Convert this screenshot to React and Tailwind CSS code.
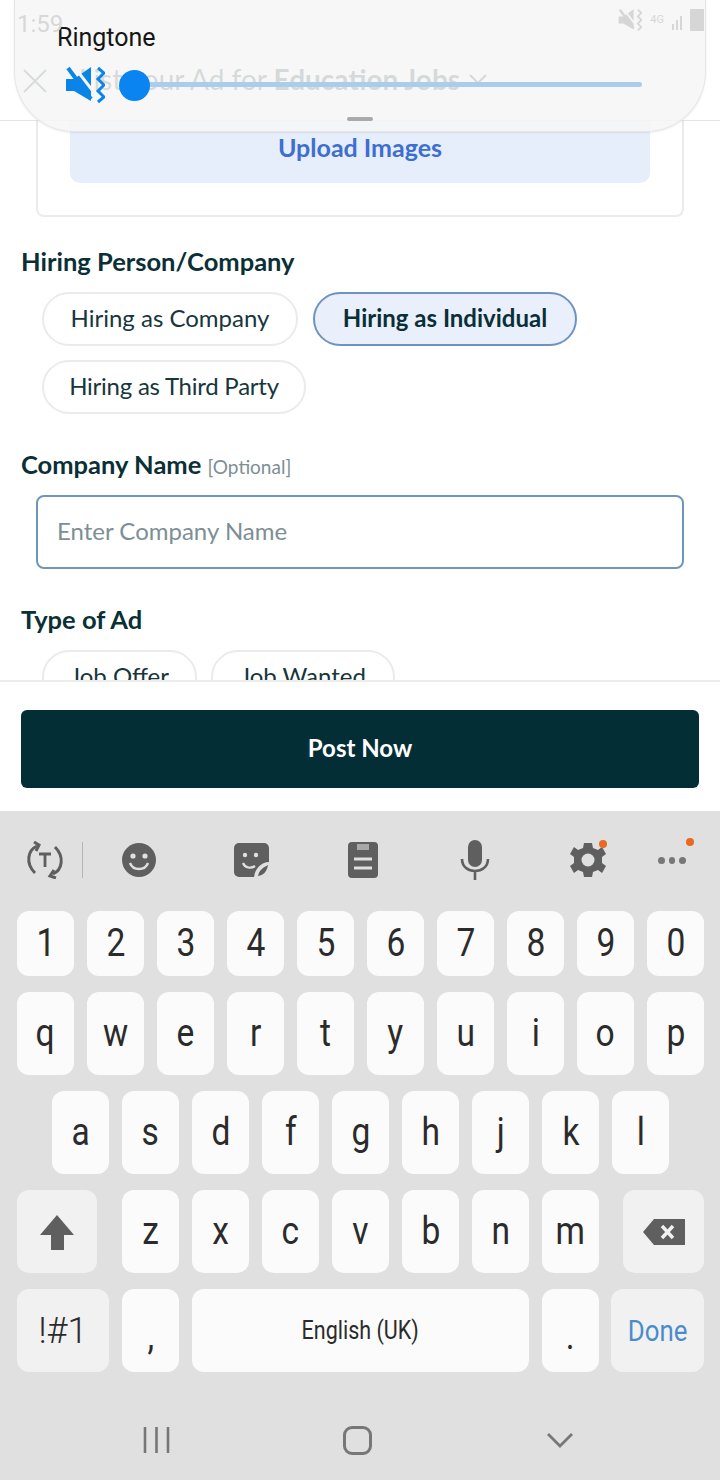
const site = { fontFamily: "Lato, 'Open Sans', sans-serif" };

function Key({ children, className = "w-[57px]", muted = false, text = "text-[39px]", plain = false }) {
  return (
    <div className={`${className} flex items-center justify-center rounded-[12px] ${muted ? "bg-[#f1f1f1]" : "bg-[#fbfbfb]"} ${text} text-[#2b2b2b]`}>
      <span className={plain ? "" : "inline-block scale-x-[0.86]"}>{children}</span>
    </div>
  );
}

function Row({ keys, className }) {
  return (
    <div className={`flex shrink-0 gap-[13px] ${className}`}>
      {keys.map((k) => (
        <Key key={k}>{k}</Key>
      ))}
    </div>
  );
}

function Chip({ children, active, className = "" }) {
  return (
    <div className={`flex h-[54px] items-center justify-center rounded-full border-2 pb-[2px] text-[24px] ${active ? "border-[#6f93c0] bg-[#e9f0fc] font-bold text-[#0b2f36]" : "border-[#ebebeb] bg-white text-[#17363c]"} ${className}`}>
      {children}
    </div>
  );
}

function Label({ children, className = "" }) {
  return <div className={`pl-[21px] text-[25.5px] leading-[30px] font-bold text-[#0b2f36] ${className}`}>{children}</div>;
}

const Muted = ({ className, color = "#0a84e8", gap = "#f6f6f6" }) => (
  <svg viewBox="0 0 40 38" className={className}>
    <path d="M1 13h8L26 1v34L9 25H1z" fill={color} />
    <path d="M7 -2l24 31" stroke={gap} strokeWidth="3" />
    <path d="M3 2l23 31" stroke={color} strokeWidth="4" />
    <path d="M33 2l6 5-6 6 6 6-6 6 6 6-6 5" fill="none" stroke={color} strokeWidth="3" />
  </svg>
);

const G = "#5f5f5f";

function Toolbar() {
  return (
    <div className="relative mb-[2px] flex h-[98px] shrink-0 items-center text-[#5f5f5f]">
      <div className="flex w-[90px] items-center pl-[26px]">
        <svg viewBox="0 0 38 38" className="h-[38px] w-[38px]" fill="none" stroke={G} strokeWidth="3">
          <path d="M9 32C-1 22 2 9 11 5" />
          <path d="M8 1l5 3-3 6" strokeWidth="3" />
          <path d="M29 6c10 10 7 23-2 27" />
          <path d="M30 37l-6-2 4-6" />
          <path d="M13 13h12M19 13v13" strokeWidth="2.8" />
        </svg>
        <div className="ml-[18px] h-[36px] w-[1px] bg-[#b5b5b5]" />
      </div>
      <svg viewBox="0 0 34 34" className="ml-[32px] h-[34px] w-[34px]">
        <circle cx="17" cy="17" r="17" fill={G} />
        <circle cx="11" cy="13" r="2.6" fill="#e0e0e0" />
        <circle cx="23" cy="13" r="2.6" fill="#e0e0e0" />
        <path d="M8 20c3 8 15 8 18 0" fill="none" stroke="#e0e0e0" strokeWidth="2.4" />
      </svg>
      <svg viewBox="0 0 36 36" className="ml-[78px] h-[36px] w-[36px]">
        <path d="M5 1h25a5 5 0 0 1 5 5v14c-8 0-14 7-15 15H5a5 5 0 0 1-5-5V6a5 5 0 0 1 5-5z" fill={G} />
        <path d="M24 34c1-5 4-8 10-11-1 6-4 10-10 11z" fill={G} />
        <circle cx="11" cy="13" r="2.2" fill="#e0e0e0" />
        <circle cx="22" cy="13" r="2.2" fill="#e0e0e0" />
        <path d="M9 21c2 5 8 6 12 3" fill="none" stroke="#e0e0e0" strokeWidth="2.2" />
      </svg>
      <svg viewBox="0 0 30 36" className="ml-[78px] h-[36px] w-[30px]">
        <rect x="0" y="0" width="30" height="36" rx="4" fill={G} />
        <rect x="9" y="2" width="12" height="6" fill="#a8a8a8" />
        <path d="M6 17h18M6 26h18" stroke="#e0e0e0" strokeWidth="3" />
      </svg>
      <svg viewBox="0 0 30 40" className="ml-[82px] h-[40px] w-[30px]" fill="none">
        <rect x="8" y="0" width="14" height="27" rx="7" fill={G} />
        <path d="M2 19c0 16 26 16 26 0M15 31v9" stroke={G} strokeWidth="2.6" />
      </svg>
      <div className="relative ml-[80px] h-[36px] w-[36px]">
        <svg viewBox="0 0 36 36" className="h-[36px] w-[36px]">
          <path d="M14 1h8l1 5 5 2 4-3 4 7-4 3v6l4 3-4 7-4-3-5 2-1 5h-8l-1-5-5-2-4 3-4-7 4-3v-6l-4-3 4-7 4 3 5-2z" fill={G} />
          <circle cx="18" cy="18" r="6.500" fill="#e0e0e0" />
        </svg>
        <div className="absolute -top-[2px] -right-[1px] h-[8px] w-[8px] rounded-full bg-[#e8691f]" />
      </div>
      <div className="relative ml-[52px] flex h-[8px] w-[28px] items-center gap-[4px]">
        <div className="h-[7px] w-[7px] rounded-full bg-[#777]" />
        <div className="h-[7px] w-[7px] rounded-full bg-[#777]" />
        <div className="h-[7px] w-[7px] rounded-full bg-[#777]" />
        <div className="absolute -top-[18px] -right-[8px] h-[8px] w-[8px] rounded-full bg-[#e8691f]" />
      </div>
    </div>
  );
}

function Keyboard() {
  return (
    <div className="flex h-[669px] flex-col bg-[#e0e0e0] font-['Roboto',sans-serif]">
      <Toolbar />
      <div className="flex shrink-0 flex-col gap-[16px] pr-[16px] pl-[17px]">
        <Row className="h-[65px]" keys={["1", "2", "3", "4", "5", "6", "7", "8", "9", "0"]} />
        <Row className="h-[83px]" keys={["q", "w", "e", "r", "t", "y", "u", "i", "o", "p"]} />
        <Row className="h-[83px] pl-[35px]" keys={["a", "s", "d", "f", "g", "h", "j", "k", "l"]} />
        <div className="flex h-[83px] shrink-0 gap-[13px]">
          <Key className="mr-[12px] w-[80px]" muted plain>
            <svg viewBox="0 0 36 36" className="h-[36px] w-[36px]">
              <path d="M18 1l17 20H25v15H12V21H1z" fill={G} />
            </svg>
          </Key>
          {["z", "x", "c", "v", "b", "n", "m"].map((k) => (
            <Key key={k}>{k}</Key>
          ))}
          <Key className="ml-[11px] w-[81px]" muted plain>
            <svg viewBox="0 0 42 26" className="h-[26px] w-[42px]">
              <path d="M11 0h31v26H11L0 13z" fill={G} />
              <path d="M19 7l11 12M30 7L19 19" stroke="#f1f1f1" strokeWidth="3.400" />
            </svg>
          </Key>
        </div>
        <div className="flex h-[83px] shrink-0 gap-[13px]">
          <Key className="w-[92px]" muted plain text="text-[36px] font-light">!#1</Key>
          <Key><span className="inline-block translate-y-[6px]">,</span></Key>
          <Key className="w-[337px]" text="text-[25px]">English (UK)</Key>
          <Key><span className="inline-block translate-y-[6px]">.</span></Key>
          <Key className="-ml-[1px] w-[93px]" muted text="text-[30px]"><span className="text-[#4a8ccb]">Done</span></Key>
        </div>
      </div>
      <div className="flex h-[108px] shrink-0 items-center pt-[28px]">
        <svg viewBox="0 0 28 28" className="ml-[143px] h-[28px] w-[28px]" stroke="#777" strokeWidth="2.600">
          <path d="M2 1v26M13.500 1v26M25 1v26" />
        </svg>
        <div className="ml-[172px] h-[29px] w-[29px] rounded-[9px] border-[3px] border-[#777]" />
        <svg viewBox="0 0 28 16" className="ml-[174px] h-[16px] w-[28px]" fill="none" stroke="#777" strokeWidth="2.800">
          <path d="M2 2l12 12L26 2" />
        </svg>
      </div>
    </div>
  );
}

export default function App() {
  return (
    <div className="relative h-[1480px] w-[720px] overflow-hidden bg-white" style={site}>
      <header className="relative flex h-[121px] items-end border-b border-[#e4e4e4] pb-[20px] pl-[79px] text-[28px] text-[#1d3a40]">
        <svg viewBox="0 0 24 24" className="absolute top-[69px] left-[23px] h-[24px] w-[24px]" stroke="#33484c" strokeWidth="2">
          <path d="M1 1l22 22M23 1L1 23" />
        </svg>
        <span className="flex items-center">
          List your Ad for&nbsp;<b>Education Jobs</b>
          <svg viewBox="0 0 18 10" className="ml-[9px] h-[10px] w-[18px]" fill="none" stroke="#1d3a40" strokeWidth="2">
            <path d="M1 1l8 8 8-8" />
          </svg>
        </span>
      </header>

      <main className="h-[559px] overflow-hidden">
        <div className="mx-[36px] flex h-[96px] justify-center rounded-b-[8px] border-2 border-t-0 border-[#ebebeb]">
          <div className="flex h-[62px] w-[580px] items-center justify-center rounded-b-[10px] bg-[#e6edfb] pb-[8px] text-[25px] font-bold text-[#3d6fd0]">
            Upload Images
          </div>
        </div>
        <Label className="mt-[29px]">Hiring Person/Company</Label>
        <div className="mt-[16px] flex flex-wrap gap-x-[15px] gap-y-[14px] pr-[100px] pl-[42px]">
          <Chip className="w-[256px]">Hiring as Company</Chip>
          <Chip active className="w-[264px]">Hiring as Individual</Chip>
          <Chip className="w-[264px] tracking-[-0.25px]">Hiring as Third Party</Chip>
        </div>
        <Label className="mt-[35px]">
          Company Name <span className="text-[19px] font-normal text-[#7d8f94]">[Optional]</span>
        </Label>
        <div className="mx-[36px] mt-[13px] flex h-[74px] items-center rounded-[8px] border-2 border-[#6f97bd] pb-[2px] pl-[19px] text-[24px] text-[#7d8f94]">
          Enter Company Name
        </div>
        <Label className="mt-[35px]">Type of Ad</Label>
        <div className="mt-[16px] flex gap-[14px] pl-[42px]">
          <Chip className="w-[155px]">Job Offer</Chip>
          <Chip className="w-[184px]">Job Wanted</Chip>
        </div>
      </main>

      <footer className="h-[131px] border-t-2 border-[#ececec] px-[21px] pt-[28px]">
        <div className="flex h-[78px] items-center justify-center rounded-[6px] bg-[#032e35] pb-[2px] text-[24px] font-bold text-white">
          Post Now
        </div>
      </footer>

      <Keyboard />

      <div className="absolute top-0 left-[14px] h-[132px] w-[692px] rounded-b-[60px] border-x border-b border-[#e6e6e6] bg-[#f6f6f6]/85 font-['Roboto',sans-serif] shadow-[0_1px_2px_rgba(0,0,0,0.08)]">
        <div className="absolute top-[6px] left-[2px] text-[24px] text-[#d8d8d8]">1:59</div>
        <div className="absolute top-[8px] right-[1px] flex items-center gap-[8px] opacity-20">
          <Muted className="h-[24px] w-[24px]" color="#555" />
          <span className="text-[11px] text-[#555]">4G</span>
          <div className="flex h-[20px] items-end gap-[2px]">
            <div className="h-[6px] w-[2px] bg-[#555]" />
            <div className="h-[10px] w-[2px] bg-[#555]" />
            <div className="h-[14px] w-[2px] bg-[#555]" />
          </div>
          <div className="h-[22px] w-[14px] bg-[#555]" />
        </div>
        <div className="pt-[23px] pl-[42px] text-[25px] leading-[30px] text-[#151515]">Ringtone</div>
        <div className="mt-[13px] flex items-center pl-[50px]">
          <Muted className="h-[38px] w-[40px]" />
          <div className="relative ml-[14px] flex h-[31px] w-[523px] items-center">
            <div className="ml-[15px] h-[5px] w-[508px] -translate-y-[1px] rounded-full bg-[#a9cdea]" />
            <div className="absolute top-0 left-0 h-[31px] w-[31px] rounded-full bg-[#0a84f0]" />
          </div>
        </div>
        <div className="mx-auto mt-[13px] h-[4px] w-[26px] rounded-full bg-[#aaaaaa]" />
      </div>
    </div>
  );
}
